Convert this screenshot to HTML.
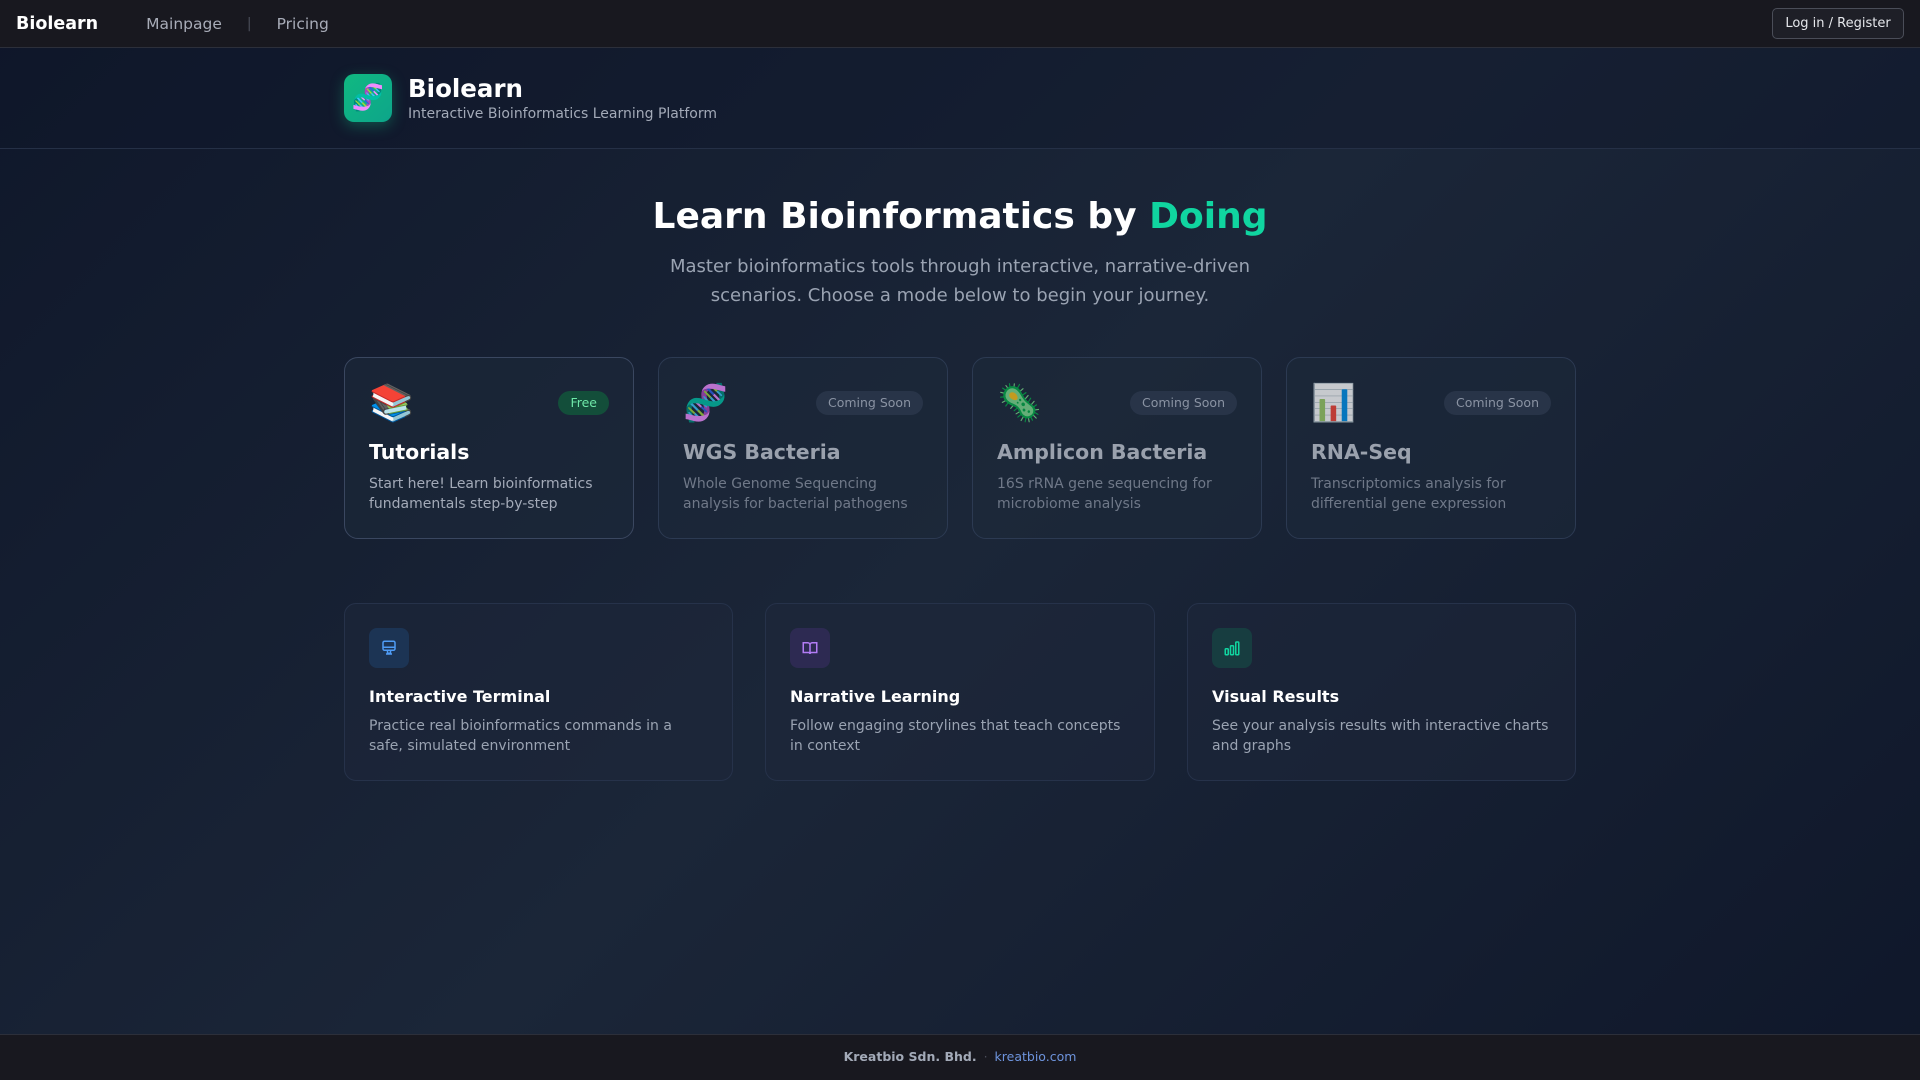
<!DOCTYPE html>
<html><head><meta charset="utf-8"><style>
*{box-sizing:border-box;margin:0;padding:0}
body{width:1920px;height:1080px;overflow:hidden;font-family:"DejaVu Sans","Liberation Sans","Noto Sans CJK SC",sans-serif;background:linear-gradient(135deg,#0f172a 0%,#1b2638 50%,#0f172a 100%);color:#fff;position:relative}
.nav{height:48px;background:#18181f;border-bottom:1px solid #2c2f3a;display:flex;align-items:center;padding:0 16px;position:relative}
.brand{font-weight:bold;font-size:17.5px;color:#fff}
.nav a{color:#a8acb8;font-size:15.5px;text-decoration:none}
.sep{color:#4a4d58;margin:0 25px;font-size:14px}
.login{position:absolute;right:16px;top:8px;height:31px;width:132px;border:1px solid #4a4d58;border-radius:5px;font-size:13px;color:#e5e7eb;display:flex;align-items:center;justify-content:center;background:#1e1f27}
.hdr{height:101px;border-bottom:1px solid #253046;position:relative;background:rgba(15,23,42,.4)}
.logo{position:absolute;left:344px;top:26px;width:48px;height:48px;border-radius:10px;background:linear-gradient(135deg,#10b981,#0da58a);box-shadow:0 4px 14px rgba(16,185,129,.35);display:flex;align-items:center;justify-content:center;font-size:26px}
.ht{position:absolute;left:408px;top:26px;font-size:24.5px;font-weight:bold}
.hs{position:absolute;left:408px;top:58px;font-size:14px;color:#a3aab8}
h1{position:absolute;top:196px;width:100%;text-align:center;font-size:36px;font-weight:bold}
h1 span{color:#10d5a0}
.sub{position:absolute;top:253px;width:100%;text-align:center;font-size:18px;line-height:28.5px;color:#9aa3b2}
.card{position:absolute;top:357px;width:290px;height:182px;border:1px solid #2c3a52;border-radius:14px;background:rgba(30,41,59,.55);padding:24px}
.emo{font-size:36px;line-height:44px;height:44px}
.badge{position:absolute;right:24px;top:33px;height:24px;padding:0 12px;border-radius:12px;font-size:12.5px;line-height:24px;background:#283448;color:#8a93a3}
.badge.free{background:#134e3a;color:#6ee7a8}
.ct{margin-top:14px;font-size:20.5px;font-weight:bold}
.cd{margin-top:10px;font-size:14px;line-height:20px;color:#a3aab8}
.dim .ct{color:#9aa1ad}.dim .cd{color:#6f7888}.dim .emo{opacity:.75}
.f{position:absolute;top:603px;height:178px;border:1px solid #26324a;border-radius:12px;background:rgba(30,41,59,.45);padding:24px}
.ib{width:40px;height:40px;border-radius:8px;display:flex;align-items:center;justify-content:center}
.ft{margin-top:19px;font-size:16px;font-weight:bold}
.fd{margin-top:10px;font-size:14px;line-height:20px;color:#9aa3b2}
.foot{position:absolute;bottom:0;left:0;width:100%;height:46px;background:#18181f;border-top:1px solid #2c2f3a;text-align:center;line-height:44px;font-size:12.5px}
.foot b{color:#a3aab8}.foot i{color:#4a4d58;font-style:normal;margin:0 7px}.foot a{color:#6d93dc;text-decoration:none}
</style></head><body>
<div class="nav"><span class="brand">Biolearn</span><span style="width:48px"></span><a>Mainpage</a><span class="sep">|</span><a>Pricing</a><div class="login">Log in / Register</div></div>
<div class="hdr"><div class="logo">🧬</div><div class="ht">Biolearn</div><div class="hs">Interactive Bioinformatics Learning Platform</div></div>
<h1>Learn Bioinformatics by <span>Doing</span></h1>
<div class="sub">Master bioinformatics tools through interactive, narrative-driven<br>scenarios. Choose a mode below to begin your journey.</div>
<div class="card" style="left:344px;border-color:#3a4760"><div class="emo">📚</div><div class="badge free">Free</div><div class="ct">Tutorials</div><div class="cd">Start here! Learn bioinformatics fundamentals step-by-step</div></div>
<div class="card dim" style="left:658px"><div class="emo">🧬</div><div class="badge">Coming Soon</div><div class="ct">WGS Bacteria</div><div class="cd">Whole Genome Sequencing analysis for bacterial pathogens</div></div>
<div class="card dim" style="left:972px"><div class="emo">🦠</div><div class="badge">Coming Soon</div><div class="ct">Amplicon Bacteria</div><div class="cd">16S rRNA gene sequencing for microbiome analysis</div></div>
<div class="card dim" style="left:1286px"><div class="emo">📊</div><div class="badge">Coming Soon</div><div class="ct">RNA-Seq</div><div class="cd">Transcriptomics analysis for differential gene expression</div></div>
<div class="f" style="left:344px;width:389px"><div class="ib" style="background:#1c3454"><svg width="18" height="18" viewBox="0 0 24 24" fill="none" stroke="#4f9cf5" stroke-width="2"><rect x="4" y="3" width="16" height="12" rx="2"/><path d="M4 11h16M10 15v4h4v-4M8 20h8"/></svg></div><div class="ft">Interactive Terminal</div><div class="fd">Practice real bioinformatics commands in a safe, simulated environment</div></div>
<div class="f" style="left:765px;width:390px"><div class="ib" style="background:#2d2a52"><svg width="18" height="18" viewBox="0 0 24 24" fill="none" stroke="#b27cf5" stroke-width="2"><path d="M3 5h6a3 3 0 0 1 3 3v12a2 2 0 0 0-2-2H3zM21 5h-6a3 3 0 0 0-3 3v12a2 2 0 0 1 2-2h7z"/></svg></div><div class="ft">Narrative Learning</div><div class="fd">Follow engaging storylines that teach concepts in context</div></div>
<div class="f" style="left:1187px;width:389px"><div class="ib" style="background:#173d40"><svg width="18" height="18" viewBox="0 0 24 24" fill="none" stroke="#10d5a0" stroke-width="2"><rect x="3" y="13" width="4" height="8" rx="1"/><rect x="10" y="9" width="4" height="12" rx="1"/><rect x="17" y="4" width="4" height="17" rx="1"/></svg></div><div class="ft">Visual Results</div><div class="fd">See your analysis results with interactive charts and graphs</div></div>
<div class="foot"><b>Kreatbio Sdn. Bhd.</b><i>·</i><a>kreatbio.com</a></div>
</body></html>
